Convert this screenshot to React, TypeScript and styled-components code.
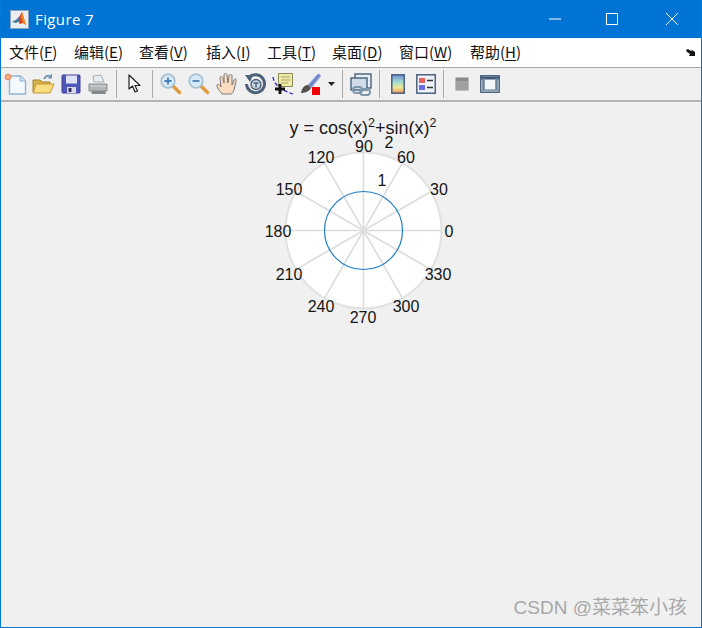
import React from "react";
import styled, { createGlobalStyle } from "styled-components";

const Global = createGlobalStyle`
  html, body { margin: 0; padding: 0; background: #f0f0f0; }
  #root { width: 702px; height: 628px; }
`;

const Win = styled.div`
  width: 702px; height: 628px; box-sizing: border-box;
  border: 1px solid #0078d7; border-top: 0;
  display: flex; flex-direction: column; background: #f0f0f0; overflow: hidden;
`;
const TitleBar = styled.div`
  height: 38px; flex: none; margin: 0 -1px; background: #0074d4;
  display: flex; align-items: center; padding-left: 10px;
`;
const TitleText = styled.span`
  margin-left: 6px; color: #fff; font: 15px/20px "Open Sans", "Noto Sans", sans-serif; letter-spacing: 0.4px;
`;
const WinButtons = styled.div`margin-left: auto; display: flex;`;
const WinButton = styled.div`
  width: 57px; height: 38px; display: flex; align-items: center; justify-content: center;
  margin-right: ${(p: { $mr?: number }) => p.$mr ?? 0}px;
`;
const MenuBar = styled.div`
  height: 29px; flex: none; background: #fff; border-bottom: 1px solid #a9a9a9;
  display: flex; align-items: center; padding-left: 8px; position: relative;
`;
const MenuItem = styled.span<{ $w: number }>`
  width: ${(p) => p.$w}px; flex: none; white-space: nowrap; color: #111;
  font: 15px/20px "Noto Sans CJK SC", "Liberation Sans", sans-serif;
  position: relative; top: -1px;
  u { text-underline-offset: 2px; }
`;
const MenuArrow = styled.div`margin-left: auto; margin-right: 6px; display: flex;`;
const ToolBar = styled.div`
  height: 32px; flex: none; border-bottom: 2px solid #b4b4b4; background: #f0f0f0;
  display: flex; align-items: center; padding-left: 2px;
`;
const ToolIcon = styled.div<{ $w?: number }>`
  width: ${(p) => p.$w ?? 28}px; height: 24px; flex: none;
  display: flex; align-items: center; justify-content: center;
`;
const Sep = styled.div`width: 1px; height: 28px; background: #a8a8a8; flex: none; margin: 0 ${(p: { $m?: number }) => p.$m ?? 6}px;`;
const Canvas = styled.div`flex: 1; position: relative; display: flex; justify-content: center;`;
const Watermark = styled.div`
  position: absolute; right: 14px; bottom: 7px; color: #a8a8a8; white-space: nowrap;
  font: 19px/24px "Liberation Sans", "Noto Sans CJK SC", sans-serif;
`;
const ChartLabel = styled.text`font: 16px "Liberation Sans", Arial, sans-serif; fill: #141414;`;
const ChartTitle = styled.text`font: 18px "Liberation Sans", Arial, sans-serif; fill: #1a1a1a;`;
const ChartSup = styled.tspan`font-size: 12.5px;`;

const I = ({ children }: { children: React.ReactNode }) => (
  <svg width="24" height="24" viewBox="0 0 24 24">{children}</svg>
);

const Lens = ({ sign }: { sign: "+" | "-" }) => (
  <I>
    <path d="M13.500 13.500l7 7" stroke="#e09a3a" strokeWidth="3.400" strokeLinecap="round" />
    <circle cx="9" cy="9" r="6.800" fill="#d5e9f7" stroke="#a9c2d4" strokeWidth="1.800" />
    <path d={sign === "+" ? "M5.500 9h7M9 5.500v7" : "M5.500 9h7"} stroke="#4a80b8" strokeWidth="1.800" />
  </I>
);

const angles = [0, 30, 60, 90, 120, 150, 180, 210, 240, 270, 300, 330];
const cx = 362.5, cy = 128.5;
const R = 78;
const labels: [string, number, number][] = [
  ["0", 448, 135], ["30", 438, 93], ["60", 405, 61], ["90", 363, 50], ["120", 320, 61], ["150", 288, 93],
  ["180", 277, 135], ["210", 288, 178], ["240", 320, 210], ["270", 362, 221], ["300", 405, 210], ["330", 437, 178],
];

export default function App() {
  return (
    <Win>
      <Global />
      <TitleBar>
        <svg width="19" height="19" viewBox="0 0 19 19">
          <rect x="0.5" y="0.5" width="18" height="18" fill="#e9eef3" stroke="#8ea4b8" />
          <path d="M2 12l4-2 3-3 3-5 4 13-3-2-3 1-2-3z" fill="#d9431e" />
          <path d="M2 12l4-2 3-3 1 2-2 3-2 1z" fill="#3d7fae" />
          <path d="M12 2l4 13-3-2-2-6z" fill="#f08a24" />
        </svg>
        <TitleText>Figure 7</TitleText>
        <WinButtons>
          <WinButton>
            <svg width="12" height="12" viewBox="0 0 12 12"><path d="M0 6h12" stroke="#fff" /></svg>
          </WinButton>
          <WinButton $mr={3}>
            <svg width="12" height="12" viewBox="0 0 12 12"><rect x="0.5" y="0.5" width="11" height="11" fill="none" stroke="#fff" /></svg>
          </WinButton>
          <WinButton $mr={2}>
            <svg width="12" height="12" viewBox="0 0 12 12"><path d="M0 0l12 12M12 0L0 12" stroke="#fff" /></svg>
          </WinButton>
        </WinButtons>
      </TitleBar>
      <MenuBar>
        <MenuItem $w={65}>文件(<u>F</u>)</MenuItem>
        <MenuItem $w={65}>编辑(<u>E</u>)</MenuItem>
        <MenuItem $w={67}>查看(<u>V</u>)</MenuItem>
        <MenuItem $w={61}>插入(<u>I</u>)</MenuItem>
        <MenuItem $w={65}>工具(<u>T</u>)</MenuItem>
        <MenuItem $w={67}>桌面(<u>D</u>)</MenuItem>
        <MenuItem $w={71}>窗口(<u>W</u>)</MenuItem>
        <MenuItem $w={66}>帮助(<u>H</u>)</MenuItem>
        <MenuArrow>
          <svg width="9" height="7" viewBox="0 0 9 7"><path d="M0 1l2-1 3 2 1-1 3 2v4H3l1-2-3-2z" fill="#111" /></svg>
        </MenuArrow>
      </MenuBar>
      <ToolBar>
        <ToolIcon $w={26}>
          <I>
            <path d="M5.500 4h11l5 5v13h-16z" fill="#f4f9fe" stroke="#8fb4d8" strokeWidth="1.400" />
            <path d="M16 4v5h5.500" fill="#cfe2f2" stroke="#8fb4d8" />
            <circle cx="4" cy="5" r="2.800" fill="#f5b080" stroke="#e8764a" />
          </I>
        </ToolIcon>
        <ToolIcon>
          <I>
            <path d="M2 20V8h7l2 2h8v10z" fill="#d8b34c" stroke="#a38328" />
            <path d="M2 21l3-9h18l-4 9z" fill="#f8de80" stroke="#c09a30" />
            <path d="M13 7c2-4 5-4 7-2" fill="none" stroke="#6e93b3" strokeWidth="1.800" />
            <path d="M21 1.500v5h-4.500z" fill="#6e93b3" />
          </I>
        </ToolIcon>
        <ToolIcon>
          <I>
            <rect x="3" y="3" width="18" height="18" rx="1" fill="#5056bc" stroke="#3a3f92" />
            <rect x="7" y="3.500" width="11" height="8" fill="#dfe2f4" />
            <rect x="8" y="15" width="9" height="6" fill="#d8d8e6" />
            <rect x="9.500" y="16" width="3" height="4" fill="#303060" />
          </I>
        </ToolIcon>
        <ToolIcon $w={26}>
          <I>
            <path d="M7 4l8-1 3 7H8z" fill="#e8edf1" stroke="#a5afb6" />
            <path d="M3 12h18v7H3z" fill="#b0b4b6" stroke="#8b9092" />
            <path d="M5 19h14l1 3H6z" fill="#84888b" />
            <path d="M4 14h16" stroke="#d5d8da" />
          </I>
        </ToolIcon>
        <Sep $m={5} />
        <ToolIcon $w={26}>
          <svg width="16" height="20" viewBox="0 0 16 20">
            <path d="M2 1v14l3.500-3 2.500 6 2.500-1-2.500-5.500H13z" fill="#fff" stroke="#222" strokeWidth="1.200" strokeLinejoin="round" />
          </svg>
        </ToolIcon>
        <Sep $m={4} />
        <ToolIcon $w={28}><Lens sign="+" /></ToolIcon>
        <ToolIcon $w={28}><Lens sign="-" /></ToolIcon>
        <ToolIcon $w={28}>
          <I>
            <path d="M7 22c-2-3-6-7-5-9s3 0 4 2L5 6c0-2 2-2 3 0l1 5 0-8c0-2 3-2 3 0l1 8 1-7c0-2 3-2 3 0l0 9 2-5c1-2 3-1 2 1l-2 9c-1 2-2 4-3 4z" fill="#fbdcc0" stroke="#7a7a7a" />
          </I>
        </ToolIcon>
        <ToolIcon $w={28}>
          <I>
            <path d="M6 5.500A9 9 0 1 1 3.500 12" fill="none" stroke="#4d6277" strokeWidth="3" />
            <path d="M2 3l8 0-3 7z" fill="#4d6277" />
            <circle cx="13" cy="12.500" r="5" fill="#c5d5e2" stroke="#4d6277" strokeWidth="1.400" />
            <path d="M10.500 11h5M13 11v4.500" stroke="#4d6277" strokeWidth="1.400" />
          </I>
        </ToolIcon>
        <ToolIcon $w={27}>
          <I>
            <path d="M7.500 1.500h14v13h-14z" fill="#f0eaa8" stroke="#8c8c55" />
            <path d="M10 5h9M10 8h9M10 11h7" stroke="#a5a56c" />
            <path d="M2 5c1 7 7 13 20 17" fill="none" stroke="#2a2acb" strokeWidth="1.300" strokeDasharray="4 2" />
            <path d="M9 12v10M4 17h10" stroke="#111" strokeWidth="2.800" />
          </I>
        </ToolIcon>
        <ToolIcon $w={28}>
          <I>
            <path d="M10 13L20 2c2 0 3 1 2 3L13 16z" fill="#7186cc" stroke="#9fb0e0" />
            <path d="M10 13c-4 0-6 3-7 8 3 0 8-1 10-5z" fill="#55524d" />
            <rect x="14" y="15" width="8" height="8" fill="#f00000" />
          </I>
        </ToolIcon>
        <ToolIcon $w={14}>
          <svg width="7" height="4" viewBox="0 0 7 4"><path d="M0 0h7L3.500 4z" fill="#222" /></svg>
        </ToolIcon>
        <Sep $m={4} />
        <ToolIcon $w={28}>
          <I>
            <rect x="6" y="2" width="16" height="14" fill="#e8eef5" stroke="#47617c" strokeWidth="1.400" />
            <rect x="2" y="6" width="16" height="12" fill="#cfdbe8" stroke="#47617c" strokeWidth="1.400" />
            <rect x="4" y="15" width="9" height="6" rx="3" fill="none" stroke="#7f97ad" strokeWidth="2" />
            <rect x="11" y="17" width="10" height="6" rx="3" fill="none" stroke="#7f97ad" strokeWidth="2" />
          </I>
        </ToolIcon>
        <Sep $m={4} />
        <ToolIcon $w={28}>
          <svg width="14" height="20" viewBox="0 0 14 20">
            <defs>
              <linearGradient id="cb" x1="0" y1="0" x2="0" y2="1">
                <stop offset="0" stopColor="#6f8ed8" />
                <stop offset="0.4" stopColor="#a5dcd0" />
                <stop offset="0.7" stopColor="#f0e890" />
                <stop offset="1" stopColor="#e89060" />
              </linearGradient>
            </defs>
            <rect x="0.800" y="0.800" width="12.400" height="18.400" fill="url(#cb)" stroke="#3f5878" strokeWidth="1.400" />
          </svg>
        </ToolIcon>
        <ToolIcon $w={27}>
          <svg width="20" height="20" viewBox="0 0 20 20">
            <rect x="0.800" y="0.800" width="18.400" height="18.400" fill="#eef2f6" stroke="#3f5878" strokeWidth="1.400" />
            <rect x="3" y="4" width="6" height="5" fill="#e86060" />
            <rect x="3" y="11" width="6" height="5" fill="#6a6ae0" />
            <path d="M11 6.500h6M11 13.500h6" stroke="#333" strokeWidth="1.400" />
          </svg>
        </ToolIcon>
        <Sep $m={4} />
        <ToolIcon $w={28}>
          <svg width="16" height="16" viewBox="0 0 16 16">
            <rect x="1.500" y="1.500" width="13" height="13" rx="1" fill="#a0a0a0" stroke="#bdbdbd" />
            <rect x="2" y="2" width="12" height="3" fill="#8a8a8a" />
          </svg>
        </ToolIcon>
        <ToolIcon $w={28}>
          <svg width="20" height="18" viewBox="0 0 20 18">
            <rect x="0.800" y="0.800" width="18.400" height="16.400" fill="#f4f7fa" stroke="#3f5878" strokeWidth="1.400" />
            <path d="M1 3h18" stroke="#3f5878" strokeWidth="3" />
            <path d="M1 15.500h18" stroke="#8fa0b1" strokeWidth="2.500" />
            <path d="M3.500 3v12M16.500 3v12" stroke="#6d8197" strokeWidth="2.500" />
          </svg>
        </ToolIcon>
      </ToolBar>
      <Canvas>
        <svg width="700" height="240" viewBox="0 0 700 240" style={{ flex: "none" }}>
          <circle cx={cx} cy={cy} r={R} fill="#fff" stroke="#e1e1e1" strokeWidth="2" />
          {angles.map((a) => (
            <line
              key={a}
              x1={cx}
              y1={cy}
              x2={cx + R * Math.cos((a * Math.PI) / 180)}
              y2={cy - R * Math.sin((a * Math.PI) / 180)}
              stroke="#dcdcdc"
              strokeWidth="1.600"
            />
          ))}
          <circle cx={cx} cy={cy} r={39} fill="none" stroke="#1f7fc4" strokeWidth="1.200" />
          <ChartTitle x={288.5} y={32}>
            y = cos(x)<ChartSup dy={-7}>2</ChartSup>
            <tspan dy={7}>+sin(x)</tspan>
            <ChartSup dy={-7}>2</ChartSup>
          </ChartTitle>
          {labels.map(([t, x, y]) => (
            <ChartLabel key={t} x={x} y={y} textAnchor="middle">{t}</ChartLabel>
          ))}
          <ChartLabel x={388} y={46} textAnchor="middle">2</ChartLabel>
          <ChartLabel x={381} y={84} textAnchor="middle">1</ChartLabel>
        </svg>
        <Watermark>CSDN @菜菜笨小孩</Watermark>
      </Canvas>
    </Win>
  );
}
